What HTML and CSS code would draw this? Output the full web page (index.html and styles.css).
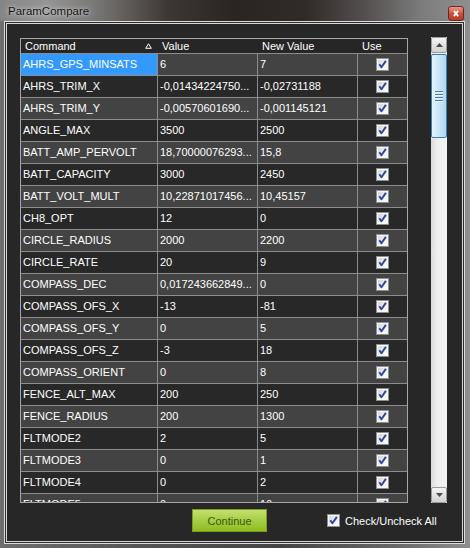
FILE: index.html
```html
<!DOCTYPE html>
<html>
<head>
<meta charset="utf-8">
<link rel="stylesheet" href="styles.css">
</head>
<body>
<svg class="defs" width="0" height="0" aria-hidden="true">
  <defs>
    <linearGradient id="cbg" x1="0" y1="0" x2="1" y2="1">
      <stop offset="0" stop-color="#d4d6da"/>
      <stop offset="1" stop-color="#ffffff"/>
    </linearGradient>
    <symbol id="cb" viewBox="0 0 13 13">
      <rect x="0.5" y="0.5" width="12" height="12" fill="#f7f7f7" stroke="#8e8f8f"/>
      <rect x="2" y="2" width="9" height="9" fill="url(#cbg)"/>
      <path d="M3.3 6.2 L5.4 9.3 L9.9 2.9" fill="none" stroke="#2c44a0" stroke-width="1.9" stroke-linejoin="round"/>
    </symbol>
  </defs>
</svg>
<div class="window">
  <div class="titlebar">
    <span class="title">ParamCompare</span>
    <span class="close"><svg width="16" height="15" viewBox="0 0 16 15"><path d="M5.5 4.5 L10.5 10.5 M10.5 4.5 L5.5 10.5" stroke="#fff" stroke-width="2"/></svg></span>
  </div>
  <div class="frame">
    <div class="client">
      <div class="main">
        <div class="grid">
          <div class="row head">
            <div class="c c1"><span>Command</span><svg class="sort" width="7" height="6" viewBox="0 0 7 6"><path d="M3.5 0.8 L6.3 5.3 L0.7 5.3 Z" fill="none" stroke="#fff" stroke-width="1"/></svg></div>
            <div class="c c2">Value</div>
            <div class="c c3">New Value</div>
            <div class="c c4">Use</div>
          </div>
          <div class="row odd"><div class="c c1 sel">AHRS_GPS_MINSATS</div><div class="c c2">6</div><div class="c c3">7</div><div class="c c4"><svg class="chk"><use href="#cb"/></svg></div></div>
          <div class="row"><div class="c c1">AHRS_TRIM_X</div><div class="c c2">-0,01434224750...</div><div class="c c3">-0,02731188</div><div class="c c4"><svg class="chk"><use href="#cb"/></svg></div></div>
          <div class="row odd"><div class="c c1">AHRS_TRIM_Y</div><div class="c c2">-0,00570601690...</div><div class="c c3">-0,001145121</div><div class="c c4"><svg class="chk"><use href="#cb"/></svg></div></div>
          <div class="row"><div class="c c1">ANGLE_MAX</div><div class="c c2">3500</div><div class="c c3">2500</div><div class="c c4"><svg class="chk"><use href="#cb"/></svg></div></div>
          <div class="row odd"><div class="c c1">BATT_AMP_PERVOLT</div><div class="c c2">18,70000076293...</div><div class="c c3">15,8</div><div class="c c4"><svg class="chk"><use href="#cb"/></svg></div></div>
          <div class="row"><div class="c c1">BATT_CAPACITY</div><div class="c c2">3000</div><div class="c c3">2450</div><div class="c c4"><svg class="chk"><use href="#cb"/></svg></div></div>
          <div class="row odd"><div class="c c1">BATT_VOLT_MULT</div><div class="c c2">10,22871017456...</div><div class="c c3">10,45157</div><div class="c c4"><svg class="chk"><use href="#cb"/></svg></div></div>
          <div class="row"><div class="c c1">CH8_OPT</div><div class="c c2">12</div><div class="c c3">0</div><div class="c c4"><svg class="chk"><use href="#cb"/></svg></div></div>
          <div class="row odd"><div class="c c1">CIRCLE_RADIUS</div><div class="c c2">2000</div><div class="c c3">2200</div><div class="c c4"><svg class="chk"><use href="#cb"/></svg></div></div>
          <div class="row"><div class="c c1">CIRCLE_RATE</div><div class="c c2">20</div><div class="c c3">9</div><div class="c c4"><svg class="chk"><use href="#cb"/></svg></div></div>
          <div class="row odd"><div class="c c1">COMPASS_DEC</div><div class="c c2">0,017243662849...</div><div class="c c3">0</div><div class="c c4"><svg class="chk"><use href="#cb"/></svg></div></div>
          <div class="row"><div class="c c1">COMPASS_OFS_X</div><div class="c c2">-13</div><div class="c c3">-81</div><div class="c c4"><svg class="chk"><use href="#cb"/></svg></div></div>
          <div class="row odd"><div class="c c1">COMPASS_OFS_Y</div><div class="c c2">0</div><div class="c c3">5</div><div class="c c4"><svg class="chk"><use href="#cb"/></svg></div></div>
          <div class="row"><div class="c c1">COMPASS_OFS_Z</div><div class="c c2">-3</div><div class="c c3">18</div><div class="c c4"><svg class="chk"><use href="#cb"/></svg></div></div>
          <div class="row odd"><div class="c c1">COMPASS_ORIENT</div><div class="c c2">0</div><div class="c c3">8</div><div class="c c4"><svg class="chk"><use href="#cb"/></svg></div></div>
          <div class="row"><div class="c c1">FENCE_ALT_MAX</div><div class="c c2">200</div><div class="c c3">250</div><div class="c c4"><svg class="chk"><use href="#cb"/></svg></div></div>
          <div class="row odd"><div class="c c1">FENCE_RADIUS</div><div class="c c2">200</div><div class="c c3">1300</div><div class="c c4"><svg class="chk"><use href="#cb"/></svg></div></div>
          <div class="row"><div class="c c1">FLTMODE2</div><div class="c c2">2</div><div class="c c3">5</div><div class="c c4"><svg class="chk"><use href="#cb"/></svg></div></div>
          <div class="row odd"><div class="c c1">FLTMODE3</div><div class="c c2">0</div><div class="c c3">1</div><div class="c c4"><svg class="chk"><use href="#cb"/></svg></div></div>
          <div class="row"><div class="c c1">FLTMODE4</div><div class="c c2">0</div><div class="c c3">2</div><div class="c c4"><svg class="chk"><use href="#cb"/></svg></div></div>
          <div class="row odd"><div class="c c1">FLTMODE5</div><div class="c c2">0</div><div class="c c3">16</div><div class="c c4"><svg class="chk"><use href="#cb"/></svg></div></div>
        </div>
        <div class="scroll">
          <div class="sbtn"><svg width="7" height="4" viewBox="0 0 7 4"><path d="M0 4 L3.5 0 L7 4 Z" fill="#4a4a4a"/></svg></div>
          <div class="thumb">
            <div class="grip"><span></span><span></span><span></span><span></span></div>
          </div>
          <div class="track"></div>
          <div class="sbtn"><svg width="7" height="4" viewBox="0 0 7 4"><path d="M0 0 L3.5 4 L7 0 Z" fill="#4a4a4a"/></svg></div>
        </div>
      </div>
      <div class="bottom">
        <button class="continue">Continue</button>
        <label class="checkall"><svg class="chk"><use href="#cb"/></svg><span>Check/Uncheck All</span></label>
      </div>
    </div>
  </div>
</div>
</body>
</html>
```

FILE: styles.css
```css
* { box-sizing: border-box; }
html, body { margin: 0; padding: 0; }
body {
  width: 470px;
  height: 548px;
  overflow: hidden;
  font-family: "Liberation Sans", Arial, sans-serif;
  font-size: 11px;
  background: #5f5f5f;
}
.defs { position: absolute; width: 0; height: 0; }
.window {
  width: 470px;
  height: 548px;
  display: flex;
  flex-direction: column;
  background: linear-gradient(90deg, #6e6e6e 0%, #555 30%, #444 60%, #6a6a6a 85%, #8e8e8e 100%);
}
.titlebar {
  height: 21px;
  display: flex;
  align-items: center;
  justify-content: space-between;
  padding: 0 6px 0 8px;
  background: linear-gradient(90deg, #858585 0%, #959595 10%, #7a7876 20%, #3c3634 36%, #2a2422 50%, #302a28 65%, #555150 78%, #7d7d7d 90%, #8f8f8f 100%);
}
.title {
  font-size: 11.5px;
  color: #111;
  text-shadow: 0 0 6px rgba(255,255,255,.7), 0 0 2px rgba(255,255,255,.5);
}
.close {
  width: 16px;
  height: 15px;
  align-self: flex-end;
  border: 1px solid #6a2a22;
  border-radius: 3px;
  background: linear-gradient(#e89a8a, #c9543f 50%, #b83a22);
  display: flex;
  align-items: center;
  justify-content: center;
}
.close svg { width: 14px; height: 13px; }
.frame {
  margin: 0 5px 0 4px;
  height: 523px;
  border: 1px solid #dcdcdc;
  padding: 1px;
  background: #2c2c2c;
  display: flex;
}
.client {
  flex: 1;
  border: 1px solid #d8d8d8;
  background: #272727;
  padding: 13px 0 0 13px;
}
.main {
  display: flex;
  align-items: flex-start;
  gap: 23px;
}
.grid {
  width: 388px;
  height: 465px;
  margin-top: 1px;
  border: 1px solid #a6a6a6;
  overflow: hidden;
  background: #282828;
}
.row {
  display: flex;
  height: 22px;
  flex-shrink: 0;
  border-bottom: 1px solid #8c8c8c;
  background: #282828;
}
.row.odd { background: #434343; }
.c {
  border-right: 1px solid #8c8c8c;
  padding-left: 2px;
  line-height: 21px;
  white-space: nowrap;
  overflow: hidden;
  color: #fff;
}
.c1 { width: 137px; }
.c2 { width: 100px; }
.c3 { width: 100px; }
.c4 {
  width: 49px;
  border-right: none;
  display: flex;
  align-items: center;
  justify-content: center;
  padding-left: 0;
}
.sel { background: #3399ff; }
.head { height: 15px; background: #262626; border-bottom-color: #8c8c8c; }
.head .c {
  line-height: 14px;
  padding-left: 4px;
  position: relative;
  border-right-color: transparent;
}
.head .c1 {
  display: flex;
  align-items: center;
  justify-content: space-between;
  padding-right: 5px;
}
.head .c4 { justify-content: flex-start; }
.head .c::after {
  content: "";
  position: absolute;
  right: -1px;
  top: 1px;
  bottom: 2px;
  width: 1px;
  background: #f0f0f0;
}
.head .c4::after { display: none; }
.sort { display: block; }
.chk { width: 13px; height: 13px; display: block; }
.scroll {
  width: 16px;
  height: 466px;
  display: flex;
  flex-direction: column;
  background: linear-gradient(90deg, #dcdcdc, #f0f0f0 40%, #f3f3f3);
}
.sbtn {
  height: 16px;
  border: 1px solid #9c9c9c;
  border-radius: 2px;
  background: linear-gradient(#f6f6f6, #e2e2e2 50%, #d2d2d2);
  display: flex;
  align-items: center;
  justify-content: center;
}
.thumb {
  height: 84px;
  margin-top: 1px;
  border: 1px solid #3c7fb1;
  border-radius: 2px;
  background: linear-gradient(90deg, #e4f3fc, #cbe6f8 50%, #aed7f4);
  display: flex;
  align-items: center;
  justify-content: center;
}
.grip { display: flex; flex-direction: column; gap: 1px; }
.grip span {
  display: block;
  width: 8px;
  height: 2px;
  background: #4d7ba6;
  border-bottom: 1px solid #e8f4fc;
}
.track { flex: 1; }
.bottom {
  display: flex;
  align-items: center;
  margin-top: 6px;
  padding-left: 172px;
}
.continue {
  width: 75px;
  height: 23px;
  padding: 0;
  border: 1px solid #789e1c;
  background: linear-gradient(#c2e06c, #a7ce45 50%, #8fbd22);
  color: #3a560c;
  font-family: "Liberation Sans", Arial, sans-serif;
  font-size: 11px;
}
.checkall {
  margin-left: 60px;
  display: flex;
  align-items: center;
  gap: 5px;
  color: #fff;
  font-size: 11px;
}
```
